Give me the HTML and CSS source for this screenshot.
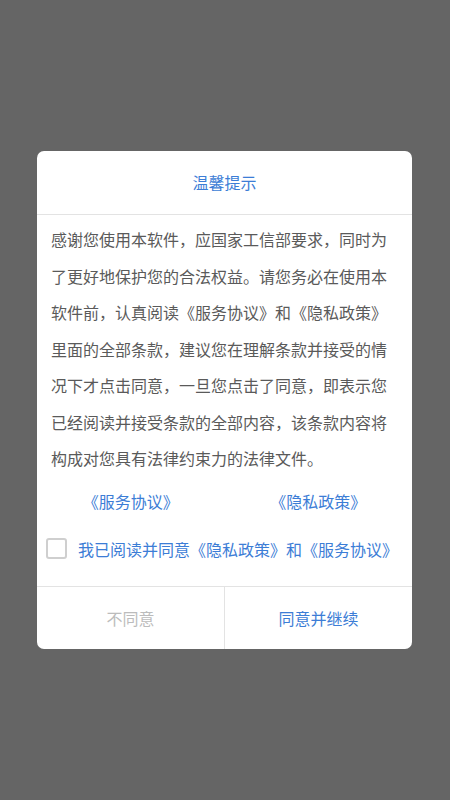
FILE: index.html
```html
<!DOCTYPE html>
<html lang="zh-CN">
<head>
<meta charset="utf-8">
<title>温馨提示</title>
<link rel="stylesheet" href="styles.css">
</head>
<body>
<div class="screen">
  <div class="dialog">
    <div class="header">温馨提示</div>
    <div class="content">
      <p class="text">感谢您使用本软件，应国家工信部要求，同时为了更好地保护您的合法权益。请您务必在使用本软件前，认真阅读《服务协议》和《隐私政策》里面的全部条款，建议您在理解条款并接受的情况下才点击同意，一旦您点击了同意，即表示您已经阅读并接受条款的全部内容，该条款内容将构成对您具有法律约束力的法律文件。</p>
      <div class="links">
        <span class="link">《服务协议》</span>
        <span class="link">《隐私政策》</span>
      </div>
      <label class="agree">
        <span class="box"></span>
        <span class="agree-text">我已阅读并同意《隐私政策》和《服务协议》</span>
      </label>
    </div>
    <div class="footer">
      <div class="btn btn-no">不同意</div>
      <div class="btn btn-yes">同意并继续</div>
    </div>
  </div>
</div>
</body>
</html>
```
FILE: styles.css
```css
html, body {
  margin: 0;
  padding: 0;
}
body {
  background: #656565;
  font-family: "Noto Sans CJK SC", "Noto Sans", sans-serif;
  text-spacing-trim: space-all;
}
.screen {
  width: 450px;
  height: 800px;
  padding-top: 151px;
  box-sizing: border-box;
}
.dialog {
  width: 375px;
  margin-left: 37px;
  background: #ffffff;
  border-radius: 7px;
  overflow: hidden;
}
.header {
  height: 63px;
  line-height: 63px;
  text-align: center;
  font-size: 16px;
  color: #3c7dd6;
  border-bottom: 1px solid #e3e3e3;
}
.content {
  padding: 6px 0 21px;
}
.text {
  margin: 0;
  padding: 0 14px;
  font-size: 16px;
  line-height: 36.5px;
  color: #5a5a5a;
}
.links {
  display: flex;
  margin-top: 8px;
  height: 32px;
  line-height: 32px;
}
.link {
  flex: 1;
  text-align: center;
  font-size: 16px;
  color: #3c7dd6;
}
.agree {
  display: flex;
  align-items: center;
  margin-top: 16px;
  height: 32px;
  padding-left: 9px;
}
.box {
  width: 21px;
  height: 21px;
  box-sizing: border-box;
  border: 2px solid #cfcfcf;
  border-radius: 3px;
  flex: none;
}
.agree-text {
  margin-left: 11px;
  font-size: 16px;
  color: #3c7dd6;
  white-space: nowrap;
}
.footer {
  display: flex;
  border-top: 1px solid #e3e3e3;
  height: 62px;
}
.btn {
  flex: 1;
  display: flex;
  align-items: center;
  justify-content: center;
  font-size: 16px;
}
.btn-no {
  color: #bcbcbc;
  border-right: 1px solid #e3e3e3;
}
.btn-yes {
  color: #3c7dd6;
}
```
